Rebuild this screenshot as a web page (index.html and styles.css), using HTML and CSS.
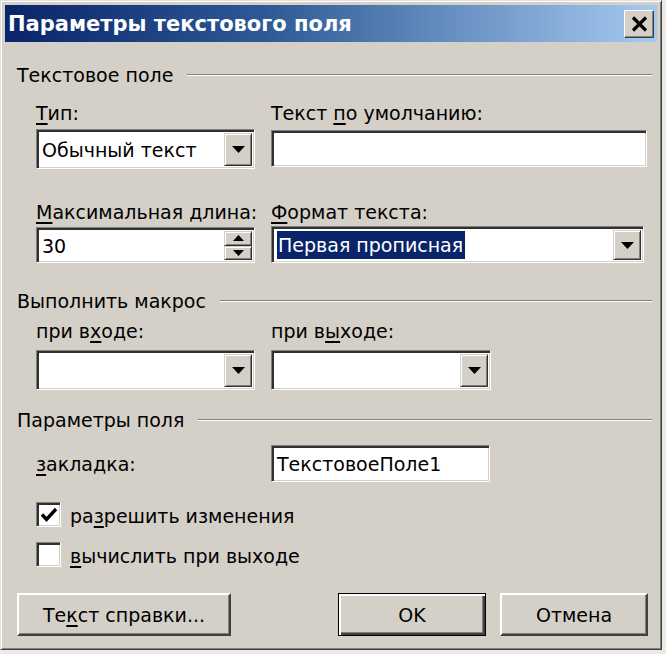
FILE: index.html
```html
<!DOCTYPE html>
<html lang="ru">
<head>
<meta charset="utf-8">
<title>Параметры текстового поля</title>
<link rel="stylesheet" href="styles.css">
</head>
<body>
<div class="window">
  <div class="titlebar">
    <span class="title">Параметры текстового поля</span>
    <span class="close"><svg width="17" height="16" viewBox="0 0 17 16"><path d="M2 1.5 L15 14.5 M15 1.5 L2 14.5" stroke="#000" stroke-width="3.2"/></svg></span>
  </div>
  <div class="content">
    <div class="ghead g1"><span>Текстовое поле</span><i class="etch"></i></div>

    <div class="grid row-a">
      <div class="lbl"><u>Т</u>ип:</div>
      <div class="lbl">Текст <u>п</u>о умолчанию:</div>
      <div class="combo c-type"><span class="val">Обычный текст</span><span class="drop"><svg width="13" height="7" viewBox="0 0 13 7"><polygon points="0,0 13,0 6.5,7" fill="#000"/></svg></span></div>
      <div class="field f-default"></div>
    </div>

    <div class="grid row-b">
      <div class="lbl"><u>М</u>аксимальная длина:</div>
      <div class="lbl"><u>Ф</u>ормат текста:</div>
      <div class="combo spin"><span class="val">30</span><span class="spinbtns"><span class="sbtn"><svg width="11" height="6" viewBox="0 0 11 6"><polygon points="0,6 11,6 5.5,0" fill="#000"/></svg></span><span class="sbtn"><svg width="11" height="6" viewBox="0 0 11 6"><polygon points="0,0 11,0 5.5,6" fill="#000"/></svg></span></span></div>
      <div class="combo c-format"><span class="val"><span class="sel">Первая прописная</span></span><span class="drop"><svg width="13" height="7" viewBox="0 0 13 7"><polygon points="0,0 13,0 6.5,7" fill="#000"/></svg></span></div>
    </div>

    <div class="ghead g2"><span>Выполнить макрос</span><i class="etch"></i></div>

    <div class="grid row-c">
      <div class="lbl">при в<u>х</u>оде:</div>
      <div class="lbl">при в<u>ы</u>ходе:</div>
      <div class="combo c-macro"><span class="val"></span><span class="drop"><svg width="13" height="7" viewBox="0 0 13 7"><polygon points="0,0 13,0 6.5,7" fill="#000"/></svg></span></div>
      <div class="combo c-macro c-exit"><span class="val"></span><span class="drop"><svg width="13" height="7" viewBox="0 0 13 7"><polygon points="0,0 13,0 6.5,7" fill="#000"/></svg></span></div>
    </div>

    <div class="ghead g3"><span>Параметры поля</span><i class="etch"></i></div>

    <div class="grid row-d">
      <div class="lbl"><u>з</u>акладка:</div>
      <div class="field f-bookmark"><span class="val">ТекстовоеПоле1</span></div>
    </div>

    <div class="check ch1">
      <span class="box"><svg width="20" height="20" viewBox="0 0 20 20"><path d="M3 9.5 L7.5 14.5 L17 4" fill="none" stroke="#000" stroke-width="3.4"/></svg></span>
      <span class="clbl">ра<u>з</u>решить изменения</span>
    </div>
    <div class="check ch2">
      <span class="box"></span>
      <span class="clbl"><u>в</u>ычислить при выходе</span>
    </div>

    <div class="buttons">
      <span class="btn b-help">Те<u>к</u>ст справки...</span>
      <span class="right">
        <span class="btn b-ok">OK</span>
        <span class="btn b-cancel">Отмена</span>
      </span>
    </div>
  </div>
</div>
</body>
</html>
```

FILE: styles.css
```css
* { box-sizing: border-box; }
html, body { margin: 0; }
body {
  background: #eceae6;
  font-family: "DejaVu Sans", Verdana, sans-serif;
  font-size: 19px;
  color: #000;
}
u { text-decoration-thickness: 2px; text-underline-offset: 3px; }

.window {
  width: 662px;
  height: 650px;
  background: #d4d0c8;
  border: 1px solid;
  border-color: #e4e1dc #404040 #404040 #e4e1dc;
  box-shadow: inset 1px 1px #fff, inset -1px -1px #808080;
  padding: 4px 4px 0 4px;
  display: flex;
  flex-direction: column;
}

.titlebar {
  height: 37px;
  flex: none;
  display: flex;
  align-items: center;
  justify-content: space-between;
  padding: 0 3px;
  background: linear-gradient(to right, #0a246a 0%, #2d5a96 40%, #a6caf0 100%);
}
.title { color: #fff; font-weight: bold; font-size: 21px; }
.close {
  width: 30px;
  height: 28px;
  display: flex;
  align-items: center;
  justify-content: center;
  background: #d4d0c8;
  border: 1px solid;
  border-color: #fff #404040 #404040 #fff;
  box-shadow: inset -1px -1px #808080;
}

.content { padding: 0 5px 0 12px; display: flex; flex-direction: column; }

.ghead { display: flex; align-items: center; height: 22px; line-height: 22px; }
.ghead .etch {
  flex: 1;
  margin-left: 14px;
  height: 2px;
  border-top: 1px solid #808080;
  border-bottom: 1px solid #fff;
}
.g1 { margin-top: 22px; }
.g2 { margin-top: 27px; }
.g3 { margin-top: 19px; }

.grid {
  display: grid;
  grid-template-columns: 219px 1fr;
  column-gap: 16px;
  margin-left: 19px;
  align-items: start;
}
.lbl { height: 22px; line-height: 22px; white-space: nowrap; }
.row-a { margin-top: 16px; row-gap: 5px; }
.row-b { margin-top: 32px; row-gap: 3px; }
.row-c { margin-top: 8px; row-gap: 8px; }
.row-d { margin-top: 14px; align-items: center; }

.field, .combo {
  background: #fff;
  border: 1px solid;
  border-color: #808080 #fff #fff #808080;
  box-shadow: inset 2px 2px #303030, inset -1px -1px #d4d0c8;
  display: flex;
  align-items: center;
}
.combo { height: 40px; padding: 3px 2px 2px 4px; }
.val { flex: 1; white-space: nowrap; padding-left: 1px; }
.drop {
  width: 28px;
  align-self: stretch;
  background: #d4d0c8;
  border: 1px solid;
  border-color: #d4d0c8 #303030 #303030 #d4d0c8;
  box-shadow: inset 1px 1px #fff, inset -1px -1px #808080;
  display: flex;
  align-items: center;
  justify-content: center;
}

.f-default { height: 37px; width: 376px; margin-top: 1px; }
.spin { height: 36px; margin-top: 1px; }
.spinbtns { width: 28px; align-self: stretch; display: flex; flex-direction: column; }
.sbtn {
  flex: 1;
  background: #d4d0c8;
  border: 1px solid;
  border-color: #d4d0c8 #303030 #303030 #d4d0c8;
  box-shadow: inset 1px 1px #fff, inset -1px -1px #808080;
  display: flex;
  align-items: center;
  justify-content: center;
}
.c-format { height: 37px; width: 373px; }
.sel {
  background: #0a246a;
  color: #fff;
  display: inline-block;
  line-height: 28px;
  padding: 0 2px 0 1px;
}
.c-macro { width: 219px; }
.c-exit { width: 220px; }

.f-bookmark { height: 37px; width: 219px; padding-left: 4px; }

.check { display: flex; align-items: center; margin-left: 19px; height: 25px; gap: 9px; }
.ch1 { margin-top: 20px; }
.ch2 { margin-top: 15px; }
.box {
  width: 25px;
  height: 25px;
  background: #fff;
  border: 1px solid;
  border-color: #808080 #fff #fff #808080;
  box-shadow: inset 2px 2px #303030, inset -1px -1px #d4d0c8;
  display: flex;
  align-items: center;
  justify-content: center;
  padding: 1px 0 0 1px;
}
.clbl { line-height: 22px; margin-top: 3px; }

.buttons { display: flex; margin-top: 26px; padding-right: 4px; }
.right { margin-left: auto; display: flex; gap: 14px; }
.btn {
  height: 43px;
  display: flex;
  align-items: center;
  justify-content: center;
  background: #d4d0c8;
  border: 2px solid;
  border-color: #fff #404040 #404040 #fff;
  box-shadow: inset -1px -1px #808080;
}
.b-help { width: 214px; }
.b-ok {
  width: 148px;
  border: 1px solid #000;
  box-shadow: inset 2px 2px #fff, inset -2px -2px #404040, inset -3px -3px #808080;
}
.b-cancel { width: 148px; }
```
